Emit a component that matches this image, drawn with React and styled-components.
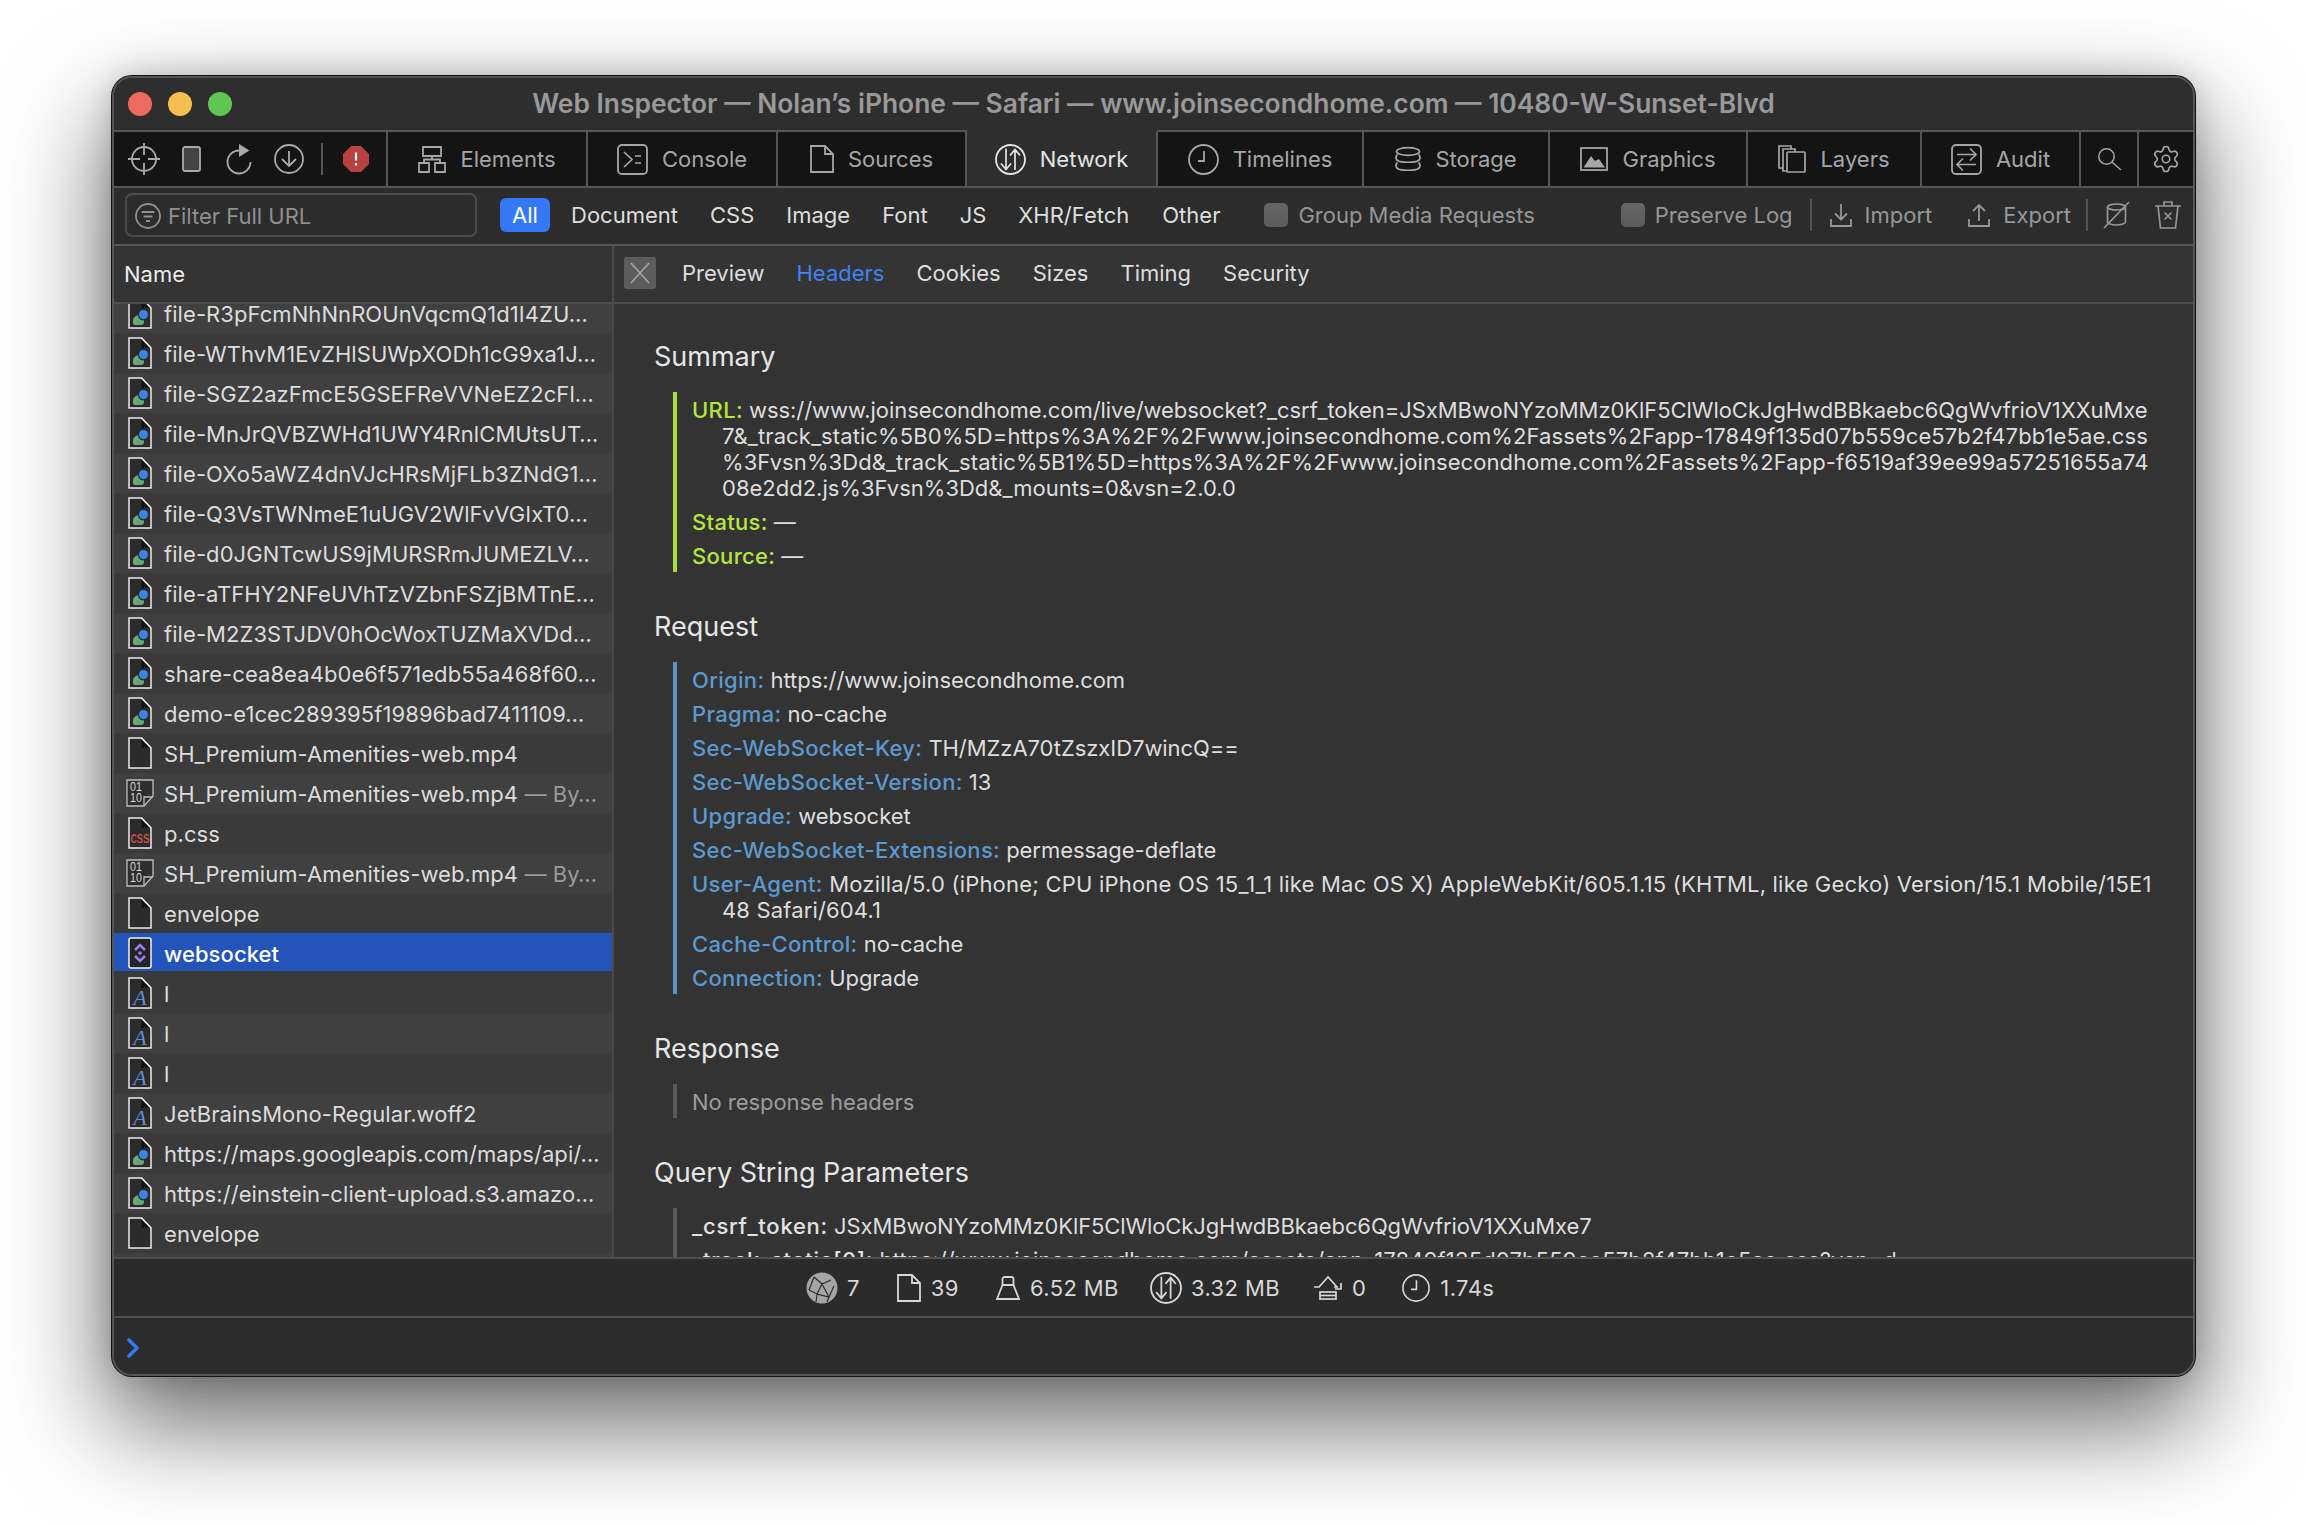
import React from 'react';
import styled, { createGlobalStyle } from 'styled-components';
import { Settings } from 'lucide-react';

const Global = createGlobalStyle`
  html, body { margin: 0; padding: 0; background: #fff; }
  * { box-sizing: border-box; }
  body { font-family: Inter, "Liberation Sans", sans-serif; font-size: 22px; }
`;

const Page = styled.div`
  width: 2306px; height: 1524px; padding: 76px 0 0 112px; background: #fff; overflow: hidden;
`;
const Window = styled.div`
  width: 2083px; height: 1300px; display: flex; flex-direction: column;
  border: 2px solid #555; border-radius: 20px; overflow: hidden; background: #2d2d2d;
  box-shadow: 0 0 0 1px #111, 0 44px 100px 6px rgba(0,0,0,.58), 0 0 30px rgba(0,0,0,.18);
`;
const TitleBar = styled.div`
  height: 52px; flex: none; position: relative; display: flex; align-items: center; justify-content: center;
  font-size: 26.4px; font-weight: 600; color: #999; background: #2e2e2e; padding-bottom: 3px;
`;
const Lights = styled.div`
  position: absolute; left: 14px; top: 14px; display: flex; gap: 16px;
`;
const Light = styled.span`
  width: 24px; height: 24px; border-radius: 50%; background: ${p => p.$c};
`;
const Toolbar = styled.div`
  height: 58px; flex: none; display: flex; background: #141414; border-bottom: 2px solid #555;
`;
const ToolGroup = styled.div`
  width: 274px; flex: none; display: flex; align-items: center; padding-left: 14px;
  border-top: 2px solid #555; border-right: 2px solid #555; color: #aaa;
`;
const Tab = styled.div`
  width: ${p => p.$w}px; flex: none; display: flex; align-items: center; justify-content: center; gap: 14px;
  border-top: 2px solid ${p => p.$active ? 'transparent' : '#555'};
  border-right: 2px solid #555;
  background: ${p => p.$active ? '#2e2e2e' : 'transparent'};
  color: ${p => p.$active ? '#e4e4e4' : '#a6a6a6'};
  &:last-child { border-right: none; flex: 1; }
`;
const Glyph = styled.svg`
  width: ${p => p.$w}px; height: ${p => p.$h}px; flex: none; display: block; overflow: visible;
  margin-left: ${p => p.$ml ?? 0}px;
  fill: none; stroke: currentColor; stroke-width: ${p => p.$sw ?? 1.8};
`;
const Rule = styled.span`
  width: 2px; height: ${p => p.$h ?? 32}px; flex: none; background: #555; margin-left: ${p => p.$ml}px;
`;
const FilterRow = styled.div`
  height: 58px; flex: none; display: flex; align-items: center; padding: 0 12px 2px 11px;
  background: #2c2c2c; border-bottom: 2px solid #555;
`;
const FilterInput = styled.div`
  width: 352px; height: 44px; flex: none; display: flex; align-items: center; gap: 7px; padding: 2px 0 0 8px;
  border: 2px solid #4c4c4c; border-radius: 7px; color: #8f8f8f;
`;
const Pill = styled.span`
  height: 34px; width: 50px; flex: none; margin-left: 23px; display: flex; align-items: center; justify-content: center;
  background: #3478f6; color: #fff; border-radius: 6px;
`;
const Scope = styled.span`
  color: #dedede; margin-left: ${p => p.$ml ?? 32}px;
`;
const Check = styled.label`
  display: flex; align-items: center; gap: 10px; color: #969696; margin-left: ${p => p.$ml}px;
`;
const Box = styled.span`
  width: 24px; height: 24px; border-radius: 5px; background: linear-gradient(#666, #5a5a5a);
`;
const Action = styled.span`
  display: flex; align-items: center; gap: 13px; color: #979797; margin-left: ${p => p.$ml}px;
`;
const Spacer = styled.span`
  flex: 1;
`;
const IconBtn = styled.span`
  display: flex; color: #979797; margin-left: ${p => p.$ml}px;
`;
const HeaderRow = styled.div`
  height: 58px; flex: none; display: flex; background: #343434; border-bottom: 2px solid #4e4e4e;
`;
const NameCell = styled.div`
  width: 500px; flex: none; display: flex; align-items: center; padding: 0 0 0 10px; color: #ececec;
  border-right: 2px solid #4a4a4a;
`;
const DetailTabs = styled.div`
  flex: 1; display: flex; align-items: center; padding: 0 0 2px 10px; gap: 32px;
`;
const CloseBtn = styled.span`
  width: 32px; height: 32px; display: flex; align-items: center; justify-content: center; background: #5c5c5c; color: #a8a8a8;
  border-radius: 2px; margin-right: -6px;
`;
const DTab = styled.span`
  color: ${p => p.$active ? '#3f82f0' : '#dedede'};
`;
const Main = styled.div`
  flex: 1; min-height: 0; display: flex;
`;
const Side = styled.div`
  width: 500px; flex: none; overflow: hidden; border-right: 2px solid #4a4a4a; background: #3b3b3b;
`;
const List = styled.div`
  margin-top: -11px;
`;
const Row = styled.div`
  height: 40px; display: flex; align-items: center; padding-left: 14px; white-space: nowrap; overflow: hidden;
  background: ${p => p.$sel ? 'linear-gradient(#2354b9 95%, #3b3b3b 95%)' : p.$odd ? '#3a3a3a' : '#404040'};
  color: ${p => p.$sel ? '#fff' : '#dcdcdc'};
  font-weight: ${p => p.$sel ? 500 : 400};
  letter-spacing: .07px;
`;
const RowIcon = styled.span`
  width: 24px; flex: none; display: flex; justify-content: center; margin-right: 12px;
`;
const RowLabel = styled.span`
  display: block; padding-top: 1px;
`;
const Dim = styled.span`
  color: #9a9a9a;
`;
const Detail = styled.div`
  flex: 1; min-width: 0; overflow: hidden; background: #333; padding: 37px 0 0 40px; letter-spacing: -0.05px;
`;
const Section = styled.section`
  margin-bottom: 39px;
`;
const Heading = styled.h2`
  margin: 0 0 19px; font-size: 27px; line-height: 32px; font-weight: 400; color: #e6e6e6; letter-spacing: 0;
`;
const Bar = styled.div`
  margin-left: 19px; padding: 5px 0 3px 15px; border-left: 4px solid ${p => p.$c}; display: flex; flex-direction: column; gap: 8px;
`;
const Pair = styled.div`
  padding-left: 30px; text-indent: -30px; line-height: 26px; white-space: nowrap; color: ${p => p.$c ?? '#dedede'};
  letter-spacing: ${p => p.$ls ?? -0.05}px;
`;
const Line = styled.span`
  display: block; text-indent: 0; letter-spacing: ${p => p.$ls ?? 0.15}px;
`;
const Key = styled.span`
  font-weight: 500; color: ${p => p.$c}; letter-spacing: ${p => p.$ls ?? 0.3}px;
`;
const StatusBar = styled.div`
  height: 61px; flex: none; display: flex; align-items: center; padding-left: 692px; letter-spacing: .4px;
  background: #2b2b2b; border-top: 2px solid #4e4e4e; border-bottom: 2px solid #4e4e4e; color: #d8d8d8;
`;
const Stat = styled.span`
  display: flex; align-items: center; gap: ${p => p.$g ?? 10}px; margin-left: ${p => p.$ml ?? 0}px;
`;
const ConsoleBar = styled.div`
  height: 56px; flex: none; display: flex; align-items: center; padding: 4px 0 0 13px; background: #2c2c2c;
`;

const NetIcon = ({ w = 31 }) => (
  <Glyph viewBox="0 0 31 31" $w={w} $h={w}>
    <circle cx="15.5" cy="15.5" r="14.5" />
    <path d="M11 4.5V25M6 19.5l5 6 5-6M20 26V6M15 11.5l5-6 5 6" strokeWidth="1.7" />
  </Glyph>
);
const ClockIcon = ({ w = 31 }) => (
  <Glyph viewBox="0 0 31 31" $w={w} $h={w}>
    <circle cx="15.5" cy="15.5" r="14.5" />
    <path d="M16 7v10h-6" />
  </Glyph>
);

const Doc = ({ children, fill = '#2b2b2b' }) => (
  <Glyph viewBox="0 0 24 32" $w={24} $h={32} $sw={1.5}>
    <path d="M1 1h12.5L23 11v20H1z" fill={fill} stroke="#ececec" />
    <path d="M13.5 1v10H23z" fill="#111" stroke="none" />
    <path d="M13.5 1L23 11" stroke="#ececec" />
    {children}
  </Glyph>
);
const ImageDoc = () => (
  <Doc>
    <path d="M5 23c0-2 3-5 6-5h2l3 4v3c0 2-1 3-3 3H7c-1 0-2-1-2-2z" fill="#6aa874" stroke="none" />
    <circle cx="15.5" cy="18" r="5.6" fill="#2b2b2b" stroke="none" />
    <circle cx="15.5" cy="17.5" r="4.5" fill="#3a85e6" stroke="none" />
  </Doc>
);
const FontDoc = () => (
  <Doc>
    <text x="12" y="28" textAnchor="middle" fontFamily="'Liberation Serif', serif" fontStyle="italic" fontSize="22" fill="#5b8fd6" stroke="none">A</text>
  </Doc>
);
const CssDoc = () => (
  <Doc>
    <text x="12" y="25.500" textAnchor="middle" fontFamily="'Liberation Sans', sans-serif" fontSize="16" textLength="19" lengthAdjust="spacingAndGlyphs" fill="#e2574c" stroke="none">css</text>
  </Doc>
);
const BinDoc = () => (
  <Glyph viewBox="0 0 28 28" $w={28} $h={28} $sw={1.3}>
    <path d="M1 1h26v16l-9 10H1z" fill="#2f2f2f" stroke="#bdbdbd" />
    <path d="M18 27v-9h9" stroke="#bdbdbd" />
    <text x="4" y="12" fontFamily="'Liberation Sans', sans-serif" fontSize="12" textLength="12" lengthAdjust="spacingAndGlyphs" fill="#d6d6d6" stroke="none">01</text>
    <text x="4" y="23" fontFamily="'Liberation Sans', sans-serif" fontSize="12" textLength="12" lengthAdjust="spacingAndGlyphs" fill="#d6d6d6" stroke="none">10</text>
  </Glyph>
);
const SocketDoc = () => (
  <Glyph viewBox="0 0 24 32" $w={24} $h={32} $sw={1.5}>
    <rect x="1" y="1" width="22" height="30" rx="2" fill="#242424" stroke="#f2f2f2" />
    <path d="M7 13l5-5 5 5M7 19l5 5 5-5" stroke="#9a7cf2" strokeWidth="2.6" />
    <circle cx="12" cy="16" r="1.8" fill="#9a7cf2" stroke="none" />
  </Glyph>
);

const ICONS = { img: ImageDoc, doc: Doc, bin: BinDoc, css: CssDoc, sock: SocketDoc, font: FontDoc };

const rows = [
  ['img', 'file-R3pFcmNhNnROUnVqcmQ1d1I4ZU…'],
  ['img', 'file-WThvM1EvZHlSUWpXODh1cG9xa1J…'],
  ['img', 'file-SGZ2azFmcE5GSEFReVVNeEZ2cFl…'],
  ['img', 'file-MnJrQVBZWHd1UWY4RnlCMUtsUT…'],
  ['img', 'file-OXo5aWZ4dnVJcHRsMjFLb3ZNdG1…'],
  ['img', 'file-Q3VsTWNmeE1uUGV2WlFvVGIxT0…'],
  ['img', 'file-d0JGNTcwUS9jMURSRmJUMEZLV…'],
  ['img', 'file-aTFHY2NFeUVhTzVZbnFSZjBMTnE…'],
  ['img', 'file-M2Z3STJDV0hOcWoxTUZMaXVDd…'],
  ['img', 'share-cea8ea4b0e6f571edb55a468f60…'],
  ['img', 'demo-e1cec289395f19896bad7411109…'],
  ['doc', 'SH_Premium-Amenities-web.mp4'],
  ['bin', 'SH_Premium-Amenities-web.mp4', ' — By…'],
  ['css', 'p.css'],
  ['bin', 'SH_Premium-Amenities-web.mp4', ' — By…'],
  ['doc', 'envelope'],
  ['sock', 'websocket'],
  ['font', 'l'],
  ['font', 'l'],
  ['font', 'l'],
  ['font', 'JetBrainsMono-Regular.woff2'],
  ['img', 'https://maps.googleapis.com/maps/api/…'],
  ['img', 'https://einstein-client-upload.s3.amazo…'],
  ['doc', 'envelope'],
];

const GREEN = '#b6e63e';
const BLUE = '#5c99cf';
const requestPairs = [
  ['Origin:', ['https://www.joinsecondhome.com']],
  ['Pragma:', ['no-cache']],
  ['Sec-WebSocket-Key:', ['TH/MZzA70tZszxID7wincQ==']],
  ['Sec-WebSocket-Version:', ['13']],
  ['Upgrade:', ['websocket']],
  ['Sec-WebSocket-Extensions:', ['permessage-deflate']],
  ['User-Agent:', ['Mozilla/5.0 (iPhone; CPU iPhone OS 15_1_1 like Mac OS X) AppleWebKit/605.1.15 (KHTML, like Gecko) Version/15.1 Mobile/15E1', '48 Safari/604.1'], 0.2],
  ['Cache-Control:', ['no-cache']],
  ['Connection:', ['Upgrade']],
];

export default function App() {
  return (
    <Page>
      <Global />
      <Window>
        <TitleBar>
          <Lights>
            <Light $c="#ed6a5e" /><Light $c="#f5bf4f" /><Light $c="#61c554" />
          </Lights>
          Web Inspector — Nolan’s iPhone — Safari — www.joinsecondhome.com — 10480-W-Sunset-Blvd
        </TitleBar>

        <Toolbar>
          <ToolGroup>
            <Glyph viewBox="0 0 32 32" $w={32} $h={32}>
              <circle cx="16" cy="16" r="12" />
              <path d="M0 16h12M20 16h12M16 0v12M16 20v12" />
            </Glyph>
            <Glyph viewBox="0 0 19 26" $w={19} $h={26} $ml={22}>
              <rect x="1" y="1" width="17" height="24" rx="2" fill="#444" />
            </Glyph>
            <Glyph viewBox="0 0 26 30" $w={26} $h={30} $ml={25}>
              <path d="M13 6.5A11.5 11.5 0 1 0 24.5 18" />
              <path d="M13 0l10.5 6.5L13 13z" fill="currentColor" stroke="none" />
            </Glyph>
            <Glyph viewBox="0 0 30 30" $w={30} $h={30} $ml={22}>
              <circle cx="15" cy="15" r="14" />
              <path d="M15 7v15M8 15l7 7 7-7" />
            </Glyph>
            <Rule $ml={17} />
            <Glyph viewBox="0 0 26 26" $w={26} $h={26} $ml={20}>
              <path d="M8 0h10l8 8v10l-8 8H8l-8-8V8z" fill="#b94141" stroke="none" />
              <path d="M13 6.5v8" stroke="#fff" strokeWidth="2.2" />
              <path d="M13 17v2.6" stroke="#fff" strokeWidth="2.2" />
            </Glyph>
          </ToolGroup>
          <Tab $w={200}>
            <Glyph viewBox="0 0 28 27" $w={28} $h={27}>
              <path d="M5 1h18v9H5zM1 17h10v9H1zM17 17h10v9H17zM14 10v3.5M6 17v-3.5h16V17" />
            </Glyph>
            Elements
          </Tab>
          <Tab $w={190}>
            <Glyph viewBox="0 0 31 31" $w={31} $h={31}>
              <rect x="1" y="1" width="29" height="29" rx="4" />
              <path d="M7 8l8 7.5-8 7.5M18 12h6M18 19h6" strokeWidth="1.7" />
            </Glyph>
            Console
          </Tab>
          <Tab $w={189}>
            <Glyph viewBox="0 0 24 28" $w={24} $h={28}>
              <path d="M1 1h14l8 8v18H1zM15 1v8h8" />
            </Glyph>
            Sources
          </Tab>
          <Tab $w={191} $active>
            <NetIcon />
            Network
          </Tab>
          <Tab $w={206}>
            <ClockIcon />
            Timelines
          </Tab>
          <Tab $w={186}>
            <Glyph viewBox="0 0 26 25" $w={26} $h={25} $sw={1.7}>
              <ellipse cx="13" cy="4.500" rx="11.500" ry="3.800" />
              <path d="M2.500 7.500C.5 9 .5 12 2.500 13.500c3 2.300 18 2.300 21 0 2-1.500 2-4.500 0-6M2.500 15.500C.5 17 .5 20 2.500 21.500c3 2.300 18 2.300 21 0 2-1.500 2-4.500 0-6" />
            </Glyph>
            Storage
          </Tab>
          <Tab $w={198}>
            <Glyph viewBox="0 0 28 24" $w={28} $h={24}>
              <rect x="1" y="1" width="26" height="22" />
              <path d="M3.500 20.500L11 9l4 5 4-2 6 8.500z" fill="currentColor" stroke="none" />
            </Glyph>
            Graphics
          </Tab>
          <Tab $w={174}>
            <Glyph viewBox="0 0 28 28" $w={28} $h={28} $sw={1.7}>
              <path d="M5 23H1V1h12v3M9 26H5V4h12v3" />
              <rect x="9" y="7" width="18" height="20" rx="1" />
            </Glyph>
            Layers
          </Tab>
          <Tab $w={159}>
            <Glyph viewBox="0 0 31 31" $w={31} $h={31}>
              <rect x="1" y="1" width="29" height="29" rx="4" />
              <path d="M6 10.500h19M19 4.500l6 6-6 6" strokeWidth="1.7" />
              <path d="M25 20.500H6M12 14.500l-6 6 6 6" strokeWidth="1.7" />
            </Glyph>
            Audit
          </Tab>
          <Tab $w={58}>
            <Glyph viewBox="0 0 23 22" $w={23} $h={22} $sw={1.5}>
              <circle cx="8.500" cy="8.500" r="7.700" />
              <path d="M14 14l9 8" />
            </Glyph>
          </Tab>
          <Tab $w={55}>
            <Settings size={30} strokeWidth={1.3} />
          </Tab>
        </Toolbar>

        <FilterRow>
          <FilterInput>
            <Glyph viewBox="0 0 26 26" $w={26} $h={26} $sw={1.8}>
              <circle cx="13" cy="13" r="12" />
              <path d="M6.500 9h13M8.500 13.500h9M11 18h4" />
            </Glyph>
            Filter Full URL
          </FilterInput>
          <Pill>All</Pill>
          <Scope $ml={21}>Document</Scope>
          <Scope>CSS</Scope>
          <Scope>Image</Scope>
          <Scope>Font</Scope>
          <Scope>JS</Scope>
          <Scope>XHR/Fetch</Scope>
          <Scope $ml={33}>Other</Scope>
          <Check $ml={44}><Box />Group Media Requests</Check>
          <Spacer />
          <Check $ml={0}><Box />Preserve Log</Check>
          <Rule $ml={17} $h={32} />
          <Action $ml={18}>
            <Glyph viewBox="0 0 22 24" $w={22} $h={24}>
              <path d="M11 1v15M5 10.500l6 6 6-6M1 16v7h20v-7" />
            </Glyph>
            Import
          </Action>
          <Action $ml={36}>
            <Glyph viewBox="0 0 22 24" $w={22} $h={24}>
              <path d="M11 18V2M5 8l6-6 6 6M1 16v7h20v-7" />
            </Glyph>
            Export
          </Action>
          <Rule $ml={15} $h={32} />
          <IconBtn $ml={15}>
            <Glyph viewBox="0 0 28 28" $w={28} $h={28} $sw={1.7}>
              <ellipse cx="13.500" cy="6" rx="9" ry="3" />
              <path d="M4.500 6v15c0 1.500 4 3 9 3s9-1.500 9-3V6M26 1L1 27" />
            </Glyph>
          </IconBtn>
          <IconBtn $ml={24}>
            <Glyph viewBox="0 0 26 28" $w={26} $h={28} $sw={1.7}>
              <path d="M0 5h26M3 5l2.500 22h15L23 5M9 5V1h8v4M9.500 11.500l7 7M16.500 11.500l-7 7" />
            </Glyph>
          </IconBtn>
        </FilterRow>

        <HeaderRow>
          <NameCell>Name</NameCell>
          <DetailTabs>
            <CloseBtn>
              <Glyph viewBox="0 0 20 22" $w={20} $h={22} $sw={1.5}>
                <path d="M1 1l18 20M19 1L1 21" />
              </Glyph>
            </CloseBtn>
            <DTab>Preview</DTab>
            <DTab $active>Headers</DTab>
            <DTab>Cookies</DTab>
            <DTab>Sizes</DTab>
            <DTab>Timing</DTab>
            <DTab>Security</DTab>
          </DetailTabs>
        </HeaderRow>

        <Main>
          <Side>
            <List>
              {rows.map(([kind, name, tail], i) => {
                const Ico = ICONS[kind];
                return (
                  <Row key={i} $odd={i % 2 === 1} $sel={kind === 'sock'}>
                    <RowIcon><Ico /></RowIcon>
                    <RowLabel>{name}{tail && <Dim>{tail}</Dim>}</RowLabel>
                  </Row>
                );
              })}
              <Row />
            </List>
          </Side>
          <Detail>
            <Section>
              <Heading>Summary</Heading>
              <Bar $c="#a8dc3c">
                <Pair $ls={-0.06}>
                  <Key $c={GREEN}>URL:</Key> wss://www.joinsecondhome.com/live/websocket?_csrf_token=JSxMBwoNYzoMMz0KlF5ClWloCkJgHwdBBkaebc6QgWvfrioV1XXuMxe
                  <Line $ls={0.1}>7&amp;_track_static%5B0%5D=https%3A%2F%2Fwww.joinsecondhome.com%2Fassets%2Fapp-17849f135d07b559ce57b2f47bb1e5ae.css</Line>
                  <Line $ls={0.08}>%3Fvsn%3Dd&amp;_track_static%5B1%5D=https%3A%2F%2Fwww.joinsecondhome.com%2Fassets%2Fapp-f6519af39ee99a57251655a74</Line>
                  <Line $ls={0}>08e2dd2.js%3Fvsn%3Dd&amp;_mounts=0&amp;vsn=2.0.0</Line>
                </Pair>
                <Pair><Key $c={GREEN}>Status:</Key> —</Pair>
                <Pair><Key $c={GREEN}>Source:</Key> —</Pair>
              </Bar>
            </Section>
            <Section>
              <Heading>Request</Heading>
              <Bar $c="#5b93c7">
                {requestPairs.map(([k, [first, ...more], ls]) => (
                  <Pair key={k} $ls={ls}>
                    <Key $c={BLUE}>{k}</Key> {first}
                    {more.map(l => <Line key={l}>{l}</Line>)}
                  </Pair>
                ))}
              </Bar>
            </Section>
            <Section>
              <Heading>Response</Heading>
              <Bar $c="#5a5a5a">
                <Pair $c="#9c9c9c">No response headers</Pair>
              </Bar>
            </Section>
            <Section>
              <Heading>Query String Parameters</Heading>
              <Bar $c="#5a5a5a">
                <Pair $ls={-0.12}><Key $c="#e2e2e2" $ls={0.75}>_csrf_token:</Key> JSxMBwoNYzoMMz0KlF5ClWloCkJgHwdBBkaebc6QgWvfrioV1XXuMxe7</Pair>
                <Pair $ls={0.15}><Key $c="#e2e2e2" $ls={0.75}>_track_static[0]:</Key> https://www.joinsecondhome.com/assets/app-17849f135d07b559ce57b2f47bb1e5ae.css?vsn=d</Pair>
              </Bar>
            </Section>
          </Detail>
        </Main>

        <StatusBar>
          <Stat $g={9}>
            <Glyph viewBox="0 0 32 32" $w={32} $h={32} $sw={1.2}>
              <circle cx="16" cy="16" r="15.500" fill="#a5a5a5" stroke="none" />
              <path d="M8 5l8 7 9-4M16 12l-5 10 12 3 5-11M16 12l7 13M11 22l-8-4M11 22l-1 8M23 25l-2 5M8 5L3 18" stroke="#2e2e2e" />
            </Glyph>
            7
          </Stat>
          <Stat $ml={37}>
            <Glyph viewBox="0 0 24 28" $w={24} $h={28}>
              <path d="M1 1h14l8 8v18H1zM15 1v8h8" />
            </Glyph>
            39
          </Stat>
          <Stat $ml={37}>
            <Glyph viewBox="0 0 24 24" $w={24} $h={24}>
              <path d="M6.500 9V3a2 2 0 0 1 2-2h7a2 2 0 0 1 2 2v6zM6.500 9L1 23h22L17.500 9" />
            </Glyph>
            6.52 MB
          </Stat>
          <Stat $ml={31} $g={9}>
            <NetIcon w={32} />
            3.32 MB
          </Stat>
          <Stat $ml={33} $g={9}>
            <Glyph viewBox="0 0 30 24" $w={30} $h={24} $sw={1.7}>
              <path d="M1 11h5L15 1l9.500 10.500M21 11h4M28 7v6h-6" />
              <rect x="7" y="16" width="16" height="7" />
              <path d="M7 19.500h16" />
            </Glyph>
            0
          </Stat>
          <Stat $ml={36}>
            <ClockIcon w={28} />
            1.74s
          </Stat>
        </StatusBar>

        <ConsoleBar>
          <Glyph viewBox="0 0 12 20" $w={12} $h={20} $sw={3.6}>
            <path d="M2 2l8 8-8 8" stroke="#3478f6" strokeLinecap="round" strokeLinejoin="round" />
          </Glyph>
        </ConsoleBar>
      </Window>
    </Page>
  );
}
